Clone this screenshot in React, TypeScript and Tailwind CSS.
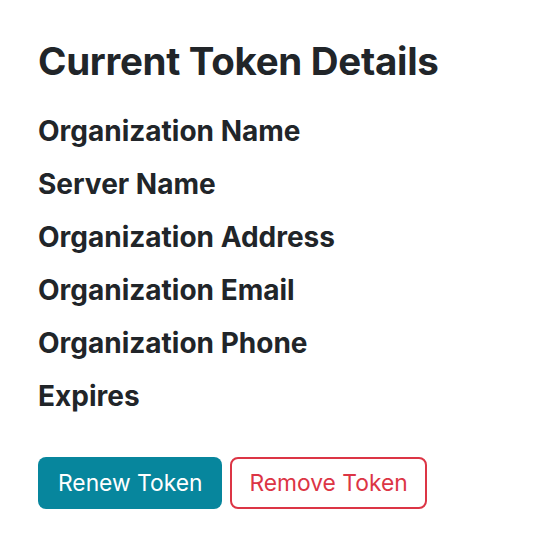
const FIELDS = [
  "Organization Name",
  "Server Name",
  "Organization Address",
  "Organization Email",
  "Organization Phone",
  "Expires",
];

export default function App() {
  return (
    <div className="min-h-screen bg-white px-[38px] pt-[38px] text-[#212529] font-['Inter',sans-serif]">
      <h3 className="text-[38.5px] font-bold leading-[1.2] tracking-[-0.3px] mb-[20px]">Current Token Details</h3>
      <div className="flex flex-col">
        {FIELDS.map((f) => (
          <div key={f} className="h-[53px] flex items-center text-[28px] font-bold">
            {f}
          </div>
        ))}
      </div>
      <div className="flex gap-[8px] mt-[35px]">
        <button className="h-[52px] px-[20px] rounded-[8px] bg-[#07869d] text-white text-[22.8px]">Renew Token</button>
        <button className="h-[52px] px-[17px] rounded-[8px] border-2 border-[#dc3545] text-[#dc3545] text-[22.8px]">Remove Token</button>
      </div>
    </div>
  );
}
